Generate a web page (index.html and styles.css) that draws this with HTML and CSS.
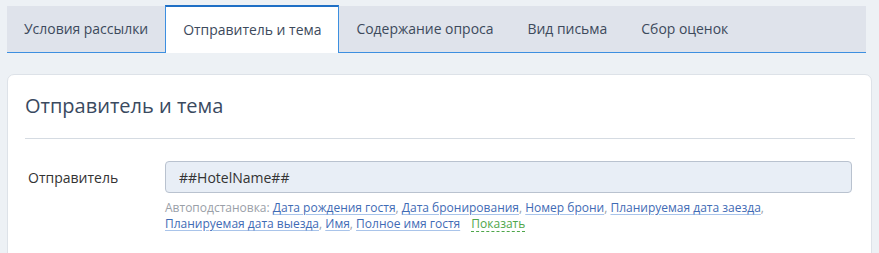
FILE: index.html
```html
<!DOCTYPE html>
<html lang="ru">
<head>
    <meta charset="UTF-8">
    <title>Отправитель и тема</title>
    <link rel="stylesheet" href="styles.css">
</head>
<body>
    <div class="tabs">
        <div class="tab">Условия рассылки</div>
        <div class="tab active">Отправитель и тема</div>
        <div class="tab">Содержание опроса</div>
        <div class="tab">Вид письма</div>
        <div class="tab">Сбор оценок</div>
    </div>
    <div class="card">
        <h2 class="card-title">Отправитель и тема</h2>
        <div class="form-row">
            <label class="form-label">Отправитель</label>
            <div class="form-field">
                <input class="form-input" type="text" value="##HotelName##">
                <div class="hint">
                    Автоподстановка: <a href="#">Дата рождения гостя</a>, <a href="#">Дата бронирования</a>, <a href="#">Номер брони</a>, <a href="#">Планируемая дата заезда</a>,
                    <a href="#">Планируемая дата выезда</a>, <a href="#">Имя</a>, <a href="#">Полное имя гостя</a>
                    <span class="show-more">Показать</span>
                </div>
            </div>
        </div>
    </div>
</body>
</html>
```

FILE: styles.css
```css
body {
    margin: 0;
    padding: 6px 13px 0 7px;
    background-color: #edf1f5;
    font-family: 'Open Sans', sans-serif;
    color: #333;
}

.tabs {
    display: flex;
    background-color: #dfe3eb;
    border-bottom: 1px solid #3d8fe0;
    height: 46px;
}

.tab {
    padding: 0 17px;
    line-height: 46px;
    font-size: 13.95px;
    color: #3d4a5c;
    cursor: pointer;
}

.tab.active {
    background-color: #fff;
    border-left: 1px solid #3d8fe0;
    border-right: 1px solid #3d8fe0;
    border-top: 2px solid #1f6fc5;
    margin-top: -1px;
    margin-bottom: -1px;
}

.card {
    margin: 21px -6px 0 0;
    background-color: #fff;
    border: 1px solid #dde2e8;
    border-radius: 7px;
    padding: 0 16px 30px 17px;
}

.card-title {
    margin: 0;
    padding: 16px 0 17px;
    font-size: 20px;
    font-weight: normal;
    line-height: 30px;
    color: #3a4a5f;
    border-bottom: 1px solid #d5dbe2;
}

.form-row {
    display: flex;
    margin-top: 22px;
}

.form-label {
    width: 137px;
    padding-left: 3px;
    line-height: 33px;
    font-size: 14px;
    color: #333;
}

.form-field {
    flex: 1;
    margin-right: 3px;
}

.form-input {
    display: block;
    box-sizing: border-box;
    width: 100%;
    height: 32px;
    padding: 0 13px;
    border: 1px solid #b9c2cf;
    border-radius: 4px;
    background-color: #e8eef6;
    font-family: 'Open Sans', sans-serif;
    font-size: 14px;
    color: #333;
}

.hint {
    max-width: 620px;
    margin-top: 7px;
    font-size: 12px;
    line-height: 16px;
    color: #9aa0a8;
}

.hint a {
    color: #3f6bb5;
    text-decoration: underline;
    text-decoration-color: #a9c4ea;
    text-underline-offset: 2px;
}

.show-more {
    margin-left: 8px;
    color: #4ea64a;
    text-decoration: underline dashed #4ea64a;
    text-underline-offset: 3px;
    cursor: pointer;
}
```
